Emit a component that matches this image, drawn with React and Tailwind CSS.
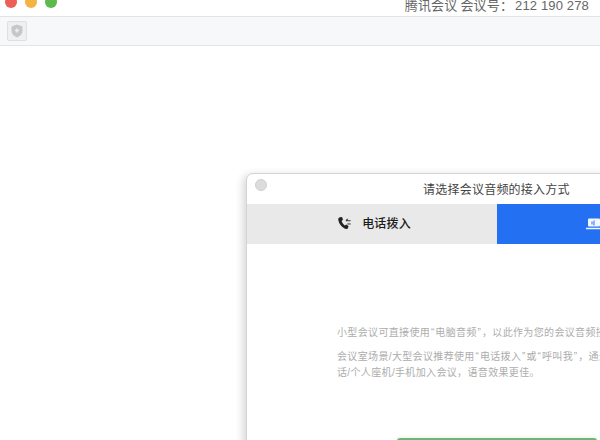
function Q({ children }) {
  return <span className="px-[0.75px]">{children}</span>;
}

export default function App() {
  return (
    <div className="relative w-[600px] h-[440px] overflow-hidden bg-white flex flex-col font-['Liberation_Sans','Noto_Sans_CJK_SC',sans-serif]">
      <div className="h-[17px] shrink-0 border-b border-[#e2e3e5] bg-white flex items-center justify-between pl-[5px] pr-[11px]">
        <div className="flex gap-[8px] -mt-[13px]">
          <div className="w-3 h-3 rounded-full bg-[#ec5f57]" />
          <div className="w-3 h-3 rounded-full bg-[#f4b443]" />
          <div className="w-3 h-3 rounded-full bg-[#5cba4c]" />
        </div>
        <div className="text-[13px] leading-[13px] text-[#666] -mt-[6px] whitespace-nowrap tracking-[0.15px] font-['Noto_Sans_CJK_SC',sans-serif]">
          腾讯会议 会议号：<span className="font-['Liberation_Sans'] tracking-[0.15px] ml-[2px]">212 190 278</span>
        </div>
      </div>
      <div className="h-[29px] shrink-0 bg-[#f7f8fa] border-b border-[#e4e5e7] pl-[7px] pt-[4px]">
        <div className="w-5 h-5 rounded-[2px] bg-[#f0f0f1] border border-[#dfe0e2] flex items-center justify-center">
          <svg width="12" height="14" viewBox="0 0 12 14">
            <path d="M6 .5 11.5 2.400V7c0 3-2.400 5.200-5.500 6.500C2.900 12.200.5 10 .5 7V2.400Z" fill="#c6c7c9" />
            <path d="M6 4.500v4M4 6.500h4" stroke="#eeeeef" strokeWidth="1.500" />
          </svg>
        </div>
      </div>
      <div className="flex-1 bg-white" />

      <div className="absolute left-[246px] top-[173px] w-[500px] h-[400px] bg-white rounded-t-[7px] border border-[#d4d4d4] shadow-[-3px_2px_8px_rgba(0,0,0,0.16)] flex flex-col font-['Noto_Sans_CJK_SC',sans-serif]">
        <div className="h-[30px] shrink-0 relative flex items-center pl-[176px]">
          <div className="absolute left-[8px] top-[5px] w-3 h-3 rounded-full bg-[#dcdcdc] border border-[#d0d0d0]" />
          <span className="text-[12px] leading-none text-[#444] whitespace-nowrap tracking-[0.23px] -mt-[1px]">请选择会议音频的接入方式</span>
        </div>
        <div className="h-[40px] shrink-0 flex">
          <div className="w-[250px] bg-[#e9e9e9] flex items-center justify-center gap-[10px] pb-[2px] pl-[4px]">
            <svg width="15" height="15" viewBox="0 0 16 16">
              <path d="M3.200 1.300 5.400 1l1 3.100-1.500 1.200c.6 1.900 1.800 3.600 3.500 4.700l1.500-1 2.500 2-1 2.300c-.4.6-1 .8-1.700.6C5.200 12.500 1.800 8.300 1.300 3.500c0-1 .8-1.900 1.900-2.200Z" fill="#222" />
              <path d="M9.500 5h5M9.500 5l2-2" stroke="#333" strokeWidth="1.100" fill="none" />
              <path d="M11 8.500h3.500" stroke="#333" strokeWidth="1.100" />
            </svg>
            <span className="text-[12px] leading-none font-medium text-[#1c1c1c] whitespace-nowrap tracking-[0.15px]">电话拨入</span>
          </div>
          <div className="flex-1 bg-[#2470f2] pl-[89px] flex items-center pb-[1px]">
            <svg width="16" height="12" viewBox="0 0 16 12">
              <rect x="2" y="0.500" width="12" height="8" rx="1" fill="#f4f7fe" />
              <path d="M0 10.500h16" stroke="#f4f7fe" strokeWidth="1.500" />
              <path d="M6 3.500v3M8 2.500v5" stroke="#2470f2" strokeWidth="1" />
            </svg>
          </div>
        </div>
        <div className="pl-[90px] pt-[81px] text-[10px] leading-[16px] text-[#adadad] whitespace-nowrap tracking-[0.35px] font-['Liberation_Sans','Noto_Sans_CJK_SC',sans-serif]">
          <p>小型会议可直接使用<Q>“</Q>电脑音频<Q>”</Q>，以此作为您的会议音频接入方式。</p>
          <p className="mt-[8px]">会议室场景/大型会议推荐使用<Q>“</Q>电话拨入<Q>”</Q>或<Q>“</Q>呼叫我<Q>”</Q>，通过座机电</p>
          <p>话/个人座机/手机加入会议，语音效果更佳。</p>
        </div>
        <div className="ml-[150px] mt-[57px] w-[200px] h-10 rounded-[3px] bg-[#6fb37a] shadow-[0_0_4px_rgba(120,220,140,0.35)]" />
      </div>
    </div>
  );
}
